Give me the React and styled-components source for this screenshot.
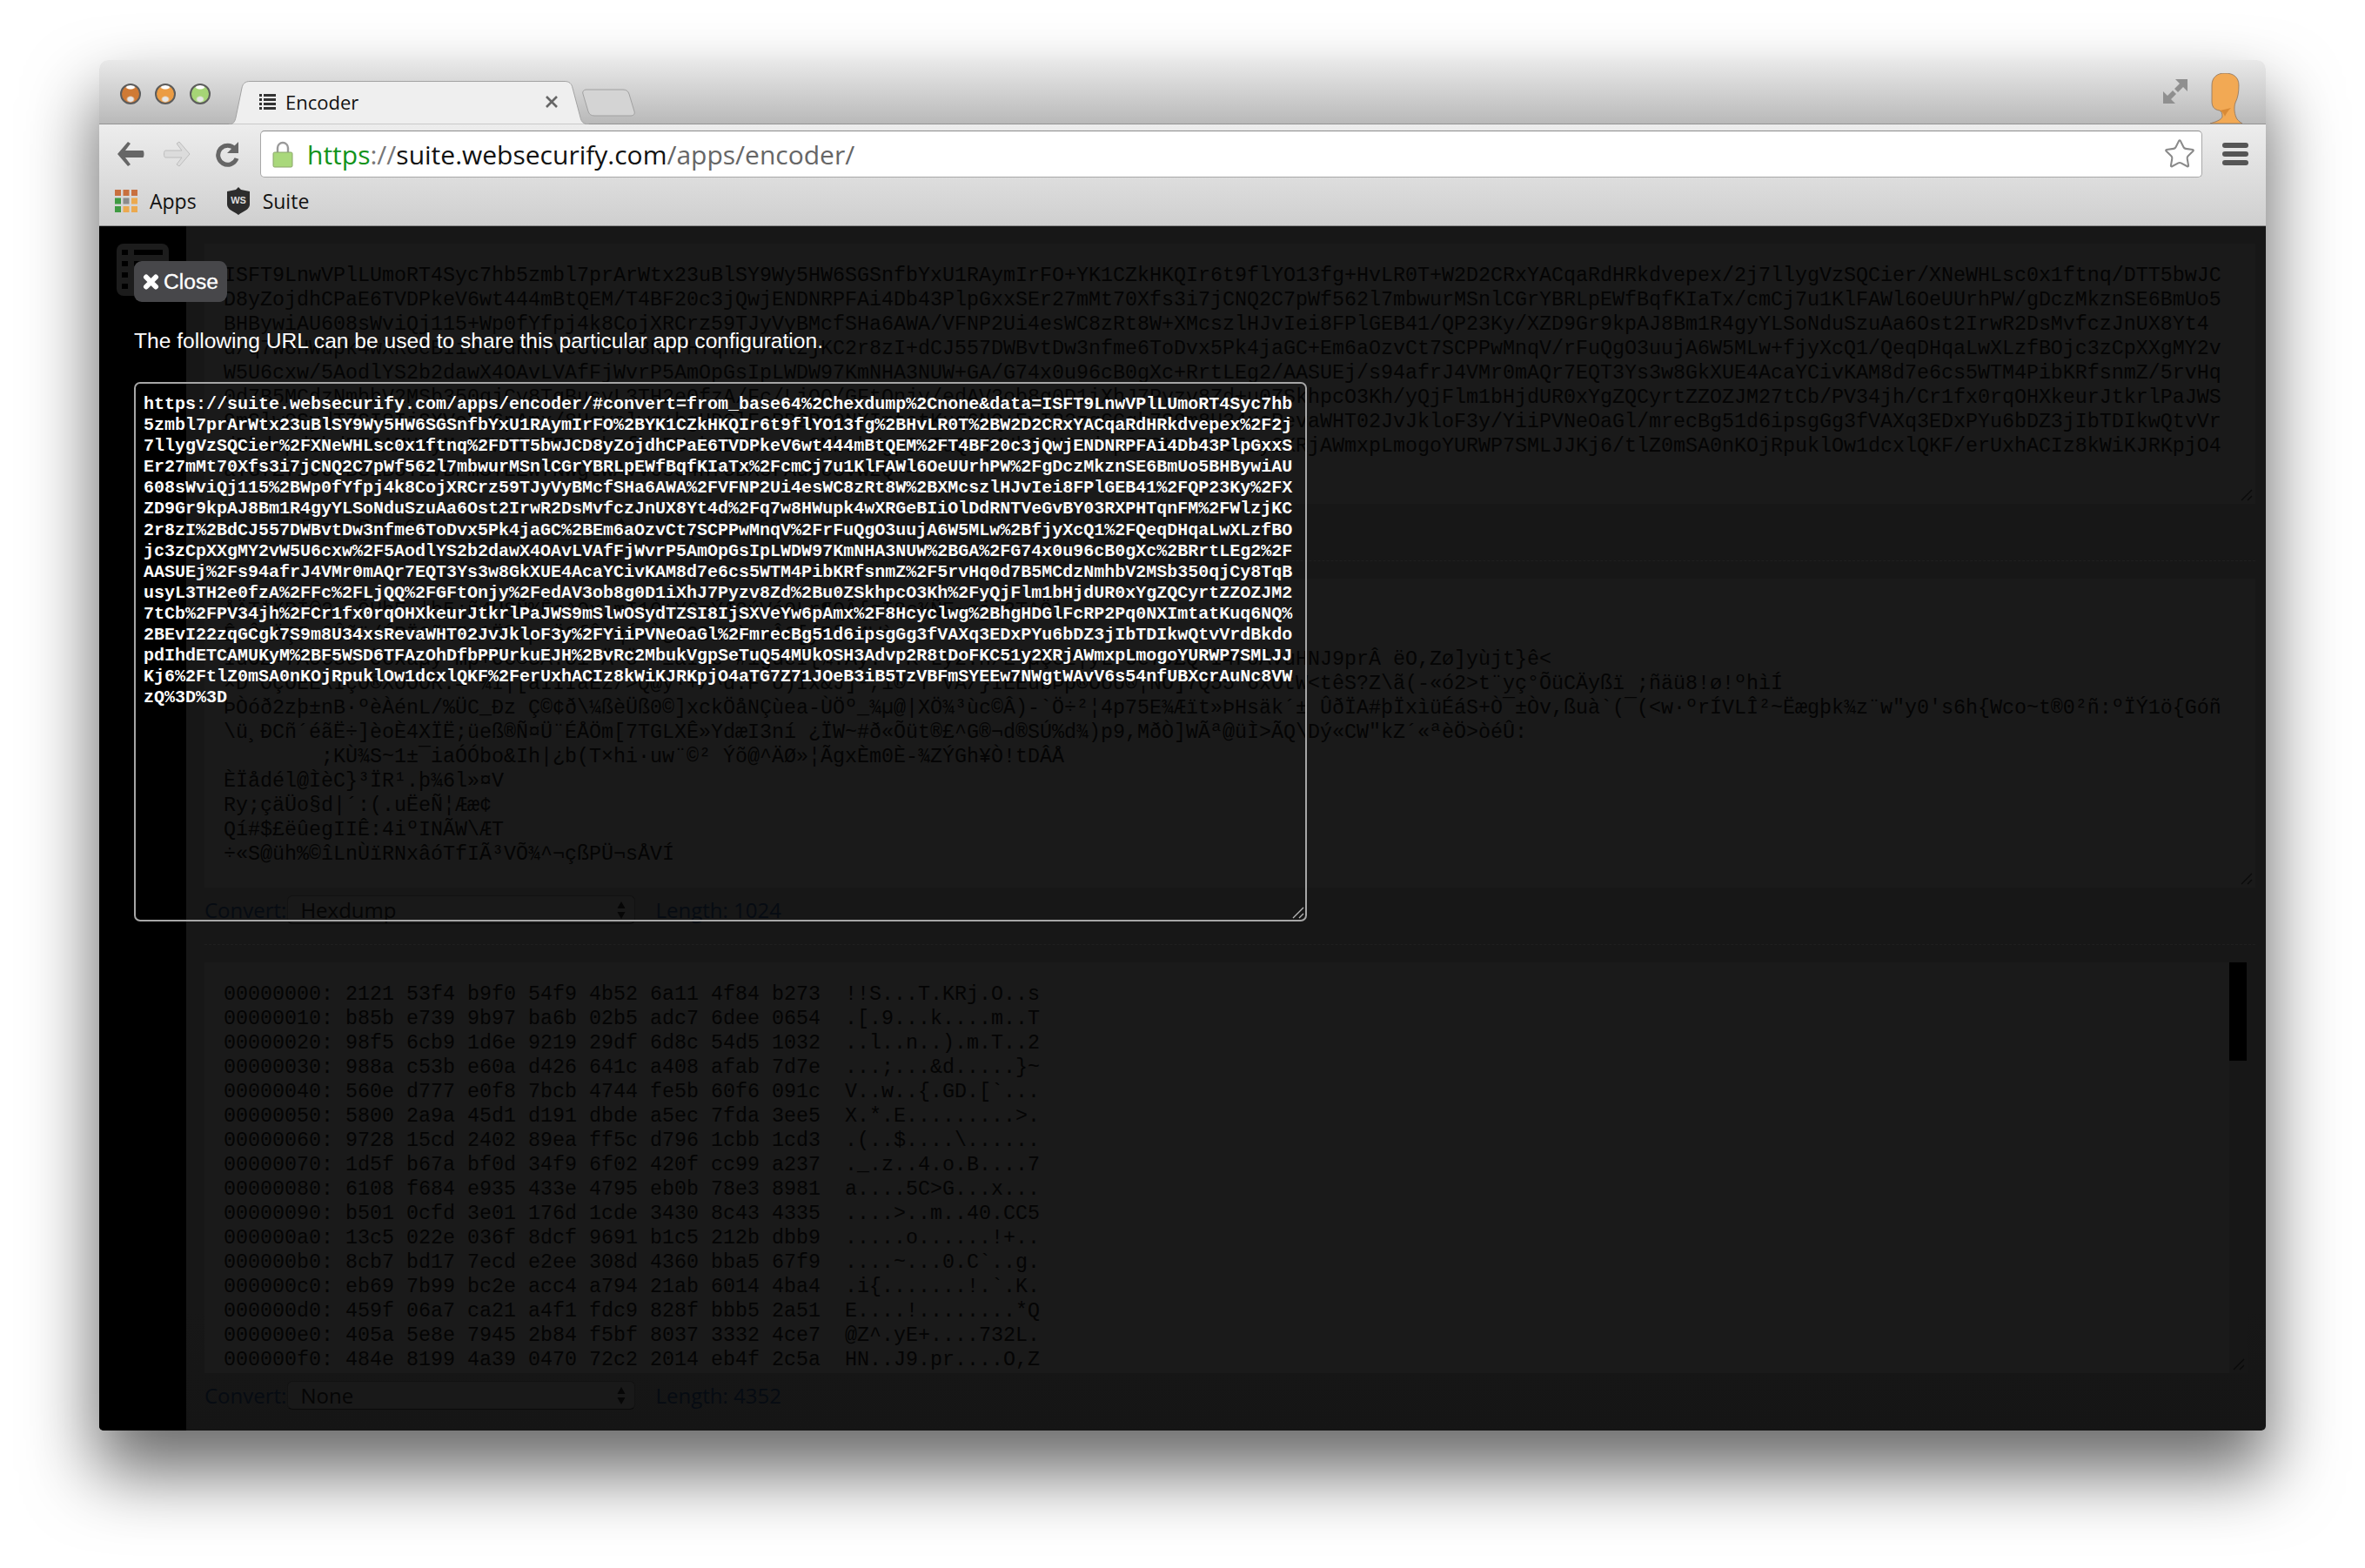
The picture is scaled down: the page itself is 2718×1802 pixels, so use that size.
import React from 'react'
import styled, { createGlobalStyle } from 'styled-components'
import { Star } from 'lucide-react'

const urlLines = [
  'https://suite.websecurify.com/apps/encoder/#convert=from_base64%2Chexdump%2Cnone&data=ISFT9LnwVPlLUmoRT4Syc7hb',
  '5zmbl7prArWtx23uBlSY9Wy5HW6SGSnfbYxU1RAymIrFO%2BYK1CZkHKQIr6t9flYO13fg%2BHvLR0T%2BW2D2CRxYACqaRdHRkdvepex%2F2j',
  '7llygVzSQCier%2FXNeWHLsc0x1ftnq%2FDTT5bwJCD8yZojdhCPaE6TVDPkeV6wt444mBtQEM%2FT4BF20c3jQwjENDNRPFAi4Db43PlpGxxS',
  'Er27mMt70Xfs3i7jCNQ2C7pWf562l7mbwurMSnlCGrYBRLpEWfBqfKIaTx%2FcmCj7u1KlFAWl6OeUUrhPW%2FgDczMkznSE6BmUo5BHBywiAU',
  '608sWviQj115%2BWp0fYfpj4k8CojXRCrz59TJyVyBMcfSHa6AWA%2FVFNP2Ui4esWC8zRt8W%2BXMcszlHJvIei8FPlGEB41%2FQP23Ky%2FX',
  'ZD9Gr9kpAJ8Bm1R4gyYLSoNduSzuAa6Ost2IrwR2DsMvfczJnUX8Yt4d%2Fq7w8HWupk4wXRGeBIiOlDdRNTVeGvBY03RXPHTqnFM%2FWlzjKC',
  '2r8zI%2BdCJ557DWBvtDw3nfme6ToDvx5Pk4jaGC%2BEm6aOzvCt7SCPPwMnqV%2FrFuQgO3uujA6W5MLw%2BfjyXcQ1%2FQeqDHqaLwXLzfBO',
  'jc3zCpXXgMY2vW5U6cxw%2F5AodlYS2b2dawX4OAvLVAfFjWvrP5AmOpGsIpLWDW97KmNHA3NUW%2BGA%2FG74x0u96cB0gXc%2BRrtLEg2%2F',
  'AASUEj%2Fs94afrJ4VMr0mAQr7EQT3Ys3w8GkXUE4AcaYCivKAM8d7e6cs5WTM4PibKRfsnmZ%2F5rvHq0d7B5MCdzNmhbV2MSb350qjCy8TqB',
  'usyL3TH2e0fzA%2FFc%2FLjQQ%2FGFtOnjy%2FedAV3ob8g0D1iXhJ7Pyzv8Zd%2Bu0ZSkhpcO3Kh%2FyQjFlm1bHjdUR0xYgZQCyrtZZOZJM2',
  '7tCb%2FPV34jh%2FCr1fx0rqOHXkeurJtkrlPaJWS9mSlwOSydTZSI8IjSXVeYw6pAmx%2F8Hcyclwg%2BhgHDGlFcRP2Pq0NXImtatKuq6NQ%',
  '2BEvI22zqGCgk7S9m8U34xsRevaWHT02JvJkloF3y%2FYiiPVNeOaGl%2FmrecBg51d6ipsgGg3fVAXq3EDxPYu6bDZ3jIbTDIkwQtvVrdBkdo',
  'pdIhdETCAMUKyM%2BF5WSD6TFAzOhDfbPPUrkuEJH%2BvRc2MbukVgpSeTuQ54MUkOSH3Advp2R8tDoFKC51y2XRjAWmxpLmogoYURWP7SMLJJ',
  'Kj6%2FtlZ0mSA0nKOjRpuklOw1dcxlQKF%2FerUxhACIz8kWiKJRKpjO4aTG7Z71JOeB3iB5TzVBFmSYEEw7NWgtWAvV6s54nfUBXcrAuNc8VW',
  'zQ%3D%3D',
]

const base64Text = decodeURIComponent(urlLines.join('').split('data=')[1])

const decodedText = [
  'ÅÄT*KRÍ@3~ ÕÜbÊ·¦þ5¿ñ4Û8Ñ%Êç^Ox,mÍ1Ò÷Y£=ÝÆ2úVé0Lr¶QÂ{gÏ8s¾ÑE~øj«3T^Ö1',
  'Ê ÔzÄÇ5¬ºÛñ¨/ÍRÏ0ãH7u¹Ë©dµ+Ö2fÎ!qÁ>Ù¿J9ÐK¼ò·mÂ6[ýP§e4Wì',
  'ÎdOZ÷7ÄÖC3C·ÖCxâµý·mþ+ÕC©3Á.Öí-Ä·Ü ²±âÏöë #îgdeÍ{¼.Äy:·~K¨Ly2.ñ/Ë*µÇé2|yL¹Oë7J£Q¨Ï4r0ÅvuHNJ9prÂ ëO,Zø]yùjt}ê<',
  '×D*ÕçÖËË\\ÎçÖ®XÕÖÕR.= ¾Ì|[áÍÍÍáËz/>Q@ý·+/^d:F Ú)Ìx&J]²,1®²Ý VÄ/}ÍËËübÞþ®ÕðÛ®¦NÒ]7Q55 6xÕtW<têS?Z\\ã(-«ó2>t¨yç°ÕüCÄyßï ;ñäü8!ø!ºhìÍ',
  'ÞÒóð2zþ±nB·ºèÀénL/%ÜC_Ðz Ç©¢ð\\¼ßèÜß0©]xckÖåNÇùea-ÙÖº_¾µ@|XÖ¾³ùc©Â)-`Ö÷²¦4p75E¾Æït»ÞHsäk´± ÛðÏA#þÏxìüÉáS+Ò¯±Òv,ßuà`(¯(<w·ºrÍVLÎ²~Ëægþk¾z¨w"y0\'s6h{Wco~t®0²ñ:ºÏÝ1ö{Góñ',
  '\\ü¸ÐCñ´éãË÷]èoÈ4XÏË;üeß®Ñ¤Ü¨ÉÅÖm[7TGLXÊ»YdæI3ní ¿ÏW~#ð«Õüt®£^G®¬d®SÚ%d¾)p9,MðÒ]WÃª@üÌ>ÃQ\\Dý«CW"kZ´«ªèÖ>òéÛ:',
  '        ;KÙ¾S~1±¯iaÓÓbo&Ih|¿b(T×hi·uw¨©² Ýõ@^ÄØ»¦ÃgxÈm0È-¾ZÝGh¥Ò!tDÂÅ',
  'ÈÏådél@ÌèC}³ÏR¹.þ¾6l»¤V',
  'Ry;çäÜo§d|´:(.uËeÑ¦Ææ¢',
  'Qí#$£ëûegIIÊ:4iºINÃW\\ÆT',
  '÷«S@üh%©îLnÙïRNxâóTfIÃ³VÕ¾^¬çßPÜ¬sÅVÍ',
].join('\n')

const hexText = [
  '00000000: 2121 53f4 b9f0 54f9 4b52 6a11 4f84 b273  !!S...T.KRj.O..s',
  '00000010: b85b e739 9b97 ba6b 02b5 adc7 6dee 0654  .[.9...k....m..T',
  '00000020: 98f5 6cb9 1d6e 9219 29df 6d8c 54d5 1032  ..l..n..).m.T..2',
  '00000030: 988a c53b e60a d426 641c a408 afab 7d7e  ...;...&d.....}~',
  '00000040: 560e d777 e0f8 7bcb 4744 fe5b 60f6 091c  V..w..{.GD.[`...',
  '00000050: 5800 2a9a 45d1 d191 dbde a5ec 7fda 3ee5  X.*.E.........>.',
  '00000060: 9728 15cd 2402 89ea ff5c d796 1cbb 1cd3  .(..$....\\......',
  '00000070: 1d5f b67a bf0d 34f9 6f02 420f cc99 a237  ._.z..4.o.B....7',
  '00000080: 6108 f684 e935 433e 4795 eb0b 78e3 8981  a....5C>G...x...',
  '00000090: b501 0cfd 3e01 176d 1cde 3430 8c43 4335  ....>..m..40.CC5',
  '000000a0: 13c5 022e 036f 8dcf 9691 b1c5 212b dbb9  .....o......!+..',
  '000000b0: 8cb7 bd17 7ecd e2ee 308d 4360 bba5 67f9  ....~...0.C`..g.',
  '000000c0: eb69 7b99 bc2e acc4 a794 21ab 6014 4ba4  .i{.......!.`.K.',
  '000000d0: 459f 06a7 ca21 a4f1 fdc9 828f bbb5 2a51  E....!........*Q',
  '000000e0: 405a 5e8e 7945 2b84 f5bf 8037 3332 4ce7  @Z^.yE+....732L.',
  '000000f0: 484e 8199 4a39 0470 72c2 2014 eb4f 2c5a  HN..J9.pr....O,Z',
].join('\n')

const GlobalStyle = createGlobalStyle`
  html, body {
    margin: 0;
    height: 100%;
    overflow: hidden;
    background: #fff;
  }
`

const Window = styled.div`
  width: 2490px;
  height: 1575px;
  margin: 69px 0 0 114px;
  display: flex;
  flex-direction: column;
  overflow: hidden;
  border-radius: 10px 10px 5px 5px;
  box-shadow: 0 45px 80px 4px rgba(0, 0, 0, 0.58);
  font-family: "Open Sans", sans-serif;
`

const TabStrip = styled.div`
  height: 74px;
  flex: none;
  display: flex;
  align-items: flex-end;
  box-sizing: border-box;
  padding-left: 24px;
  background: linear-gradient(#e9e9e9, #b9b9b9);
  border-bottom: 1px solid #949494;
`

const Lights = styled.div`
  align-self: flex-start;
  margin-top: 27px;
  display: flex;
  gap: 16px;
`

const Light = styled.span`
  position: relative;
  width: 24px;
  height: 24px;
  border-radius: 50%;
  border: 2px solid #5c5c5c;
  box-sizing: border-box;
  background: radial-gradient(ellipse 6px 3px at 50% 2px, #fff 0 70%, transparent 100%),
    radial-gradient(ellipse 5px 4px at 50% 16px, #e6e6e6 0 60%, transparent 100%),
    ${p => p.$color};
`

const Tab = styled.div`
  position: relative;
  width: 414px;
  height: 50px;
  margin: 0 0 -1px 21px;
  display: flex;
  align-items: center;
  box-sizing: border-box;
  padding: 0 35px 2px 35px;
  font-size: 22px;
  color: #111;
`

const TabShape = styled.svg`
  position: absolute;
  inset: 0;
  width: 100%;
  height: 100%;
`

const TabIcon = styled.svg`
  position: relative;
  width: 19px;
  height: 20px;
  margin-right: 11px;
`

const TabTitle = styled.span`
  position: relative;
  flex: 1;
`

const TabClose = styled.svg`
  position: relative;
  width: 16px;
  height: 14px;
`

const NewTab = styled.svg`
  align-self: flex-start;
  margin: 33px 0 0 -9px;
  width: 63px;
  height: 32px;
`

const StripRight = styled.div`
  margin-left: auto;
  padding-right: 26px;
  display: flex;
  align-items: flex-end;
  gap: 26px;
`

const ExpandIcon = styled.svg`
  width: 28px;
  height: 28px;
  margin-bottom: 23px;
`

const Avatar = styled.svg`
  width: 38px;
  height: 58px;
  display: block;
`

const Toolbar = styled.div`
  flex: none;
  height: 117px;
  background: linear-gradient(#ededed, #cfcfcf);
  border-bottom: 1px solid #8f8f8f;
  box-sizing: border-box;
`

const NavRow = styled.div`
  display: flex;
  align-items: center;
  height: 61px;
  padding: 7px 20px 0 19px;
  box-sizing: border-box;
`

const NavIcon = styled.svg`
  flex: none;
  width: ${p => p.$w}px;
  height: 30px;
  margin-right: ${p => p.$gap}px;
`

const AddressBar = styled.div`
  flex: 1;
  height: 54px;
  display: flex;
  align-items: center;
  box-sizing: border-box;
  padding: 0 6px 0 13px;
  background: #fff;
  border: 1px solid #a8a8a8;
  border-top-color: #8c8c8c;
  border-radius: 5px;
  font-size: 30px;
  white-space: nowrap;
`

const LockIcon = styled.svg`
  width: 24px;
  height: 31px;
  margin-right: 16px;
`

const UrlPart = styled.span`
  color: ${p => p.$color};
`

const UrlText = styled.div`
  flex: 1;
`

const StarIcon = styled(Star)`
  color: #8a8a8a;
  display: block;
`

const MenuButton = styled.div`
  margin-left: 23px;
  width: 30px;
  display: flex;
  flex-direction: column;
  gap: 4px;
`

const MenuLine = styled.span`
  height: 6px;
  border-radius: 3px;
  background: #555;
`

const Bookmarks = styled.div`
  display: flex;
  align-items: center;
  height: 54px;
  padding-left: 18px;
  font-size: 23px;
  color: #111;
`

const Bookmark = styled.div`
  display: flex;
  align-items: center;
  gap: ${p => p.$gap}px;
  margin-right: 35px;
`

const Content = styled.div`
  position: relative;
  flex: 1;
  display: flex;
  background: linear-gradient(#171717 90%, #151515);
  overflow: hidden;
`

const Sidebar = styled.div`
  flex: none;
  width: 100px;
  background: #000;
  box-sizing: border-box;
  padding: 20px 0 0 20px;
`

const SideIcon = styled.svg`
  width: 60px;
  height: 60px;
  display: block;
`

const Main = styled.div`
  flex: 1;
  min-width: 0;
  padding: 20px 12px 0 21px;
`

const Panel = styled.div`
  position: relative;
  height: ${p => p.$h}px;
  box-sizing: border-box;
  padding: 23px 0 0 22px;
  background: #1a1a1a;
  overflow: hidden;
`

const CodeText = styled.div`
  width: 2296px;
  font: 23.33px/28px "Liberation Mono", monospace;
  color: #040404;
  white-space: ${p => (p.$wrap ? 'normal' : 'pre')};
  word-break: ${p => (p.$wrap ? 'break-all' : 'normal')};
`

const HexPanel = styled.div`
  position: relative;
  height: 472px;
  margin-right: 9px;
  display: flex;
  background: #1a1a1a;
  overflow: hidden;
`

const HexBody = styled.div`
  flex: 1;
  padding: 23px 0 0 22px;
`

const ScrollTrack = styled.div`
  flex: none;
  width: 21px;
  background: #171717;
`

const ScrollThumb = styled.div`
  width: 20px;
  height: 113px;
  background: #000;
`

const Grip = styled.svg`
  position: absolute;
  right: 3px;
  bottom: 3px;
  width: 14px;
  height: 14px;
  color: ${p => (p.$light ? '#b5b5b5' : '#0a0a0a')};
`

const ConvertRow = styled.div`
  display: flex;
  align-items: center;
  height: 33px;
  margin-top: 9px;
  font-size: 24px;
  color: #060b12;
`

const SelectBox = styled.div`
  width: 400px;
  height: 33px;
  margin: 0 23px 0 1px;
  display: flex;
  align-items: center;
  justify-content: space-between;
  box-sizing: border-box;
  padding: 0 10px 0 14px;
  border: 1px solid #121212;
  border-bottom-color: #0a0a0a;
  border-radius: 6px;
  background: #191919;
  color: #050505;
`

const SelectArrows = styled.svg`
  width: 10px;
  height: 22px;
`

const Divider = styled.div`
  margin: 23px 0 20px;
  border-top: 1px dashed #1f1f1f;
`

const Modal = styled.div`
  position: absolute;
  top: 40px;
  left: 40px;
  display: flex;
  flex-direction: column;
  align-items: flex-start;
`

const CloseButton = styled.button`
  height: 47px;
  width: 107px;
  display: flex;
  align-items: center;
  gap: 5px;
  padding: 0 0 0 10px;
  border: 0;
  border-radius: 9px;
  background: #47474a;
  color: #fff;
  font: 24.6px "Liberation Sans", Arial, sans-serif;
  -webkit-text-stroke: 0.3px #fff;
`

const CloseGlyph = styled.svg`
  width: 19px;
  height: 18px;
  flex: none;
`

const Message = styled.div`
  margin: 30px 0 32px;
  font: 24.6px/30px "Liberation Sans", Arial, sans-serif;
  color: #fff;
`

const ShareField = styled.textarea`
  display: block;
  width: 1348px;
  height: 620px;
  box-sizing: border-box;
  margin: 0;
  padding: 12px 15px 0 9px;
  border: 2px solid #a6a6a6;
  border-radius: 7px;
  outline: 0;
  background: transparent;
  color: #fff;
  font: bold 20px/24.1px "Liberation Mono", monospace;
  white-space: pre;
  overflow: hidden;
  resize: none;
`

const gripLines = <path d="M1 13 L13 1 M8 13 L13 8" stroke="currentColor" strokeWidth="1.4" />

function Converter({ select, length }) {
  return (
    <ConvertRow>
      Convert:
      <SelectBox>
        {select}
        <SelectArrows viewBox="0 0 10 22">
          <path d="M5 1 L9.5 9 H.5 Z M5 21 L9.5 13 H.5 Z" fill="#060606" />
        </SelectArrows>
      </SelectBox>
      Length: {length}
    </ConvertRow>
  )
}

const appsColors = ['#c8703f', '#c8703f', '#c8703f', '#3f9a42', '#8b8b8b', '#eba94f', '#3f9a42', '#eba94f', '#eba94f']

export default function App() {
  return (
    <>
      <GlobalStyle />
      <Window>
        <TabStrip>
          <Lights>
            <Light $color="#cf7a35" />
            <Light $color="#eb9c44" />
            <Light $color="#a6d576" />
          </Lights>
          <Tab>
            <TabShape viewBox="0 0 414 50" preserveAspectRatio="none">
              <path
                d="M0 50 C5 50 7 47 8 42 L15 8 C16 3 19 .5 24 .5 H386 C391 .5 394 3 395 8 L404 42 C405 47 408 50 414 50 Z"
                fill="#efefef"
                stroke="#a3a3a3"
              />
            </TabShape>
            <TabIcon viewBox="0 0 19 20">
              <path
                d="M0 1h3v3H0zM5 1h14v3H5zM0 6h3v3H0zM5 6h14v3H5zM0 11h3v3H0zM5 11h14v3H5zM0 16h3v3H0zM5 16h14v3H5z"
                fill="#333"
              />
            </TabIcon>
            <TabTitle>Encoder</TabTitle>
            <TabClose viewBox="0 0 16 14">
              <path d="M2 1 L14 13 M14 1 L2 13" stroke="#666" strokeWidth="2.6" />
            </TabClose>
          </Tab>
          <NewTab viewBox="0 0 63 32">
            <path
              d="M6 1 H48 C52 1 54 3 55 6 L61 26 C62 29 60 31 57 31 H15 C11 31 9 29 8 26 L2 6 C1 3 3 1 6 1 Z"
              fill="#d4d4d4"
              stroke="#a0a0a0"
            />
          </NewTab>
          <StripRight>
            <ExpandIcon viewBox="0 0 28 28">
              <path
                d="M14 0 H28 V14 L23 9 L17 15 L13 11 L19 5 Z M0 14 L5 19 L11 13 L15 17 L9 23 L14 28 H0 Z"
                fill="#8f8f8f"
              />
            </ExpandIcon>
            <Avatar viewBox="0 0 38 58">
              <path
                d="M0 58 C6 56 13 54 14 50 C14 46 13 44 11 43 C4 42 2 38 2 32 V14 C2 5 8 0 17 0 C27 0 33 5 33 14 C33 22 32 28 29 34 C27 40 28 48 31 53 C33 55 35 57 37 58 Z"
                fill="#f2a954"
                stroke="#8a7460"
                strokeWidth=".8"
              />
              <path d="M11 43 C16 42 20 41 24 40 C20 44 18 47 17 50 C16 47 14 44 11 43 Z" fill="#d98a36" />
            </Avatar>
          </StripRight>
        </TabStrip>
        <Toolbar>
          <NavRow>
            <NavIcon $w={33} $gap={22} viewBox="0 0 33 30">
              <path d="M14 1 L2 15 L14 29 L17 27 L11 19 H31 C33 19 33 11 31 11 H11 L17 3 Z" fill="#666" />
            </NavIcon>
            <NavIcon $w={32} $gap={28} viewBox="0 0 32 30">
              <path
                d="M18 1 L30 15 L18 29 L15 27 L21 19 H2 C0 19 0 11 2 11 H21 L15 3 Z"
                fill="#dcdcdc"
                stroke="#bdbdbd"
              />
            </NavIcon>
            <NavIcon $w={27} $gap={24} viewBox="0 0 27 30">
              <path d="M22 9 A11 11 0 1 0 24 20" fill="none" stroke="#666" strokeWidth="5" />
              <path d="M26 1 V14 H13 Z" fill="#666" />
            </NavIcon>
            <AddressBar>
              <LockIcon viewBox="0 0 24 31">
                <path d="M6 14 V8 A6 6 0 0 1 18 8 V14" fill="none" stroke="#9a9a9a" strokeWidth="2.4" />
                <rect x="1" y="13" width="22" height="17" rx="1.5" fill="#a9d87b" stroke="#8aa46c" />
              </LockIcon>
              <UrlText>
                <UrlPart $color="#11931a">https</UrlPart>
                <UrlPart $color="#777">://</UrlPart>
                <UrlPart $color="#111">suite.websecurify.com</UrlPart>
                <UrlPart $color="#666">/apps/encoder/</UrlPart>
              </UrlText>
              <StarIcon size={38} strokeWidth={1.3} />
            </AddressBar>
            <MenuButton>
              <MenuLine />
              <MenuLine />
              <MenuLine />
            </MenuButton>
          </NavRow>
          <Bookmarks>
            <Bookmark $gap={14}>
              <svg width="26" height="26" viewBox="0 0 26 26">
                {appsColors.map((c, i) => (
                  <rect key={i} x={(i % 3) * 9.5} y={Math.floor(i / 3) * 9.5} width="7" height="7" fill={c} />
                ))}
              </svg>
              Apps
            </Bookmark>
            <Bookmark $gap={15}>
              <svg width="26" height="32" viewBox="0 0 26 32">
                <path d="M13 0 L16 3 L26 5 V20 C26 26 18 28 13 32 C8 28 0 26 0 20 V5 L10 3 Z" fill="#2d2d2d" />
                <text
                  x="13"
                  y="19"
                  textAnchor="middle"
                  fontSize="11"
                  fontWeight="700"
                  fontFamily="Liberation Sans"
                  fill="#ddd"
                >
                  WS
                </text>
              </svg>
              Suite
            </Bookmark>
          </Bookmarks>
        </Toolbar>
        <Content>
          <Sidebar>
            <SideIcon viewBox="0 0 60 60">
              <rect width="60" height="60" rx="8" fill="#1c1c1c" />
              <path
                d="M6 7h7v6H6zM20 7h33v6H20zM6 20h7v6H6zM20 20h33v6H20zM6 33h7v6H6zM20 33h33v6H20zM6 46h7v6H6zM20 46h33v6H20z"
                fill="#000"
              />
            </SideIcon>
          </Sidebar>
          <Main>
            <Panel $h={299}>
              <CodeText $wrap>{base64Text}</CodeText>
              <Grip viewBox="0 0 14 14">{gripLines}</Grip>
            </Panel>
            <Converter select="From Base64" length="1368" />
            <Divider />
            <Panel $h={355}>
              <CodeText>{decodedText}</CodeText>
              <Grip viewBox="0 0 14 14">{gripLines}</Grip>
            </Panel>
            <Converter select="Hexdump" length="1024" />
            <Divider />
            <HexPanel>
              <HexBody>
                <CodeText>{hexText}</CodeText>
              </HexBody>
              <ScrollTrack>
                <ScrollThumb />
              </ScrollTrack>
              <Grip viewBox="0 0 14 14">{gripLines}</Grip>
            </HexPanel>
            <Converter select="None" length="4352" />
          </Main>
          <Modal>
            <CloseButton>
              <CloseGlyph viewBox="0 0 19 18">
                <path d="M4 3.5 L15 14.5 M15 3.5 L4 14.5" stroke="#fff" strokeWidth="6" strokeLinecap="round" />
              </CloseGlyph>
              Close
            </CloseButton>
            <Message>The following URL can be used to share this particular app configuration.</Message>
            <ShareField readOnly value={urlLines.join('\n')} />
            <Grip $light viewBox="0 0 14 14">{gripLines}</Grip>
          </Modal>
        </Content>
      </Window>
    </>
  )
}
